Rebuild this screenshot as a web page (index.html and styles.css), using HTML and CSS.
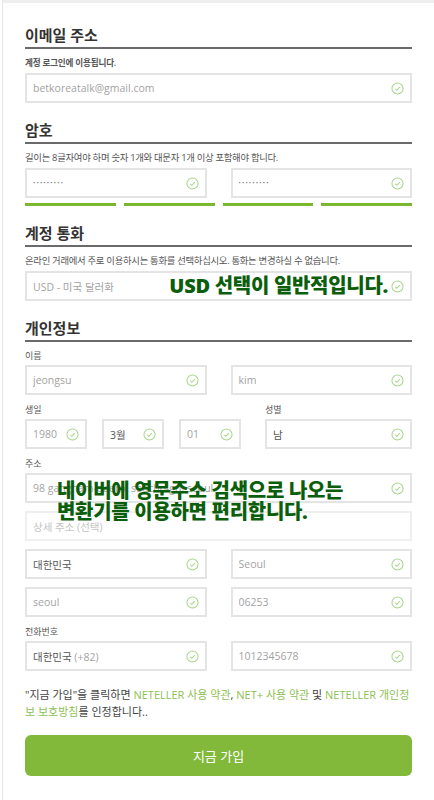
FILE: index.html
```html
<!DOCTYPE html>
<html lang="ko">

<head>
    <meta charset="UTF-8" />
    <meta name="viewport" content="width=device-width, initial-scale=1.0" />
    <title>NETELLER 가입</title>
    <link rel="stylesheet" href="styles.css">
</head>

<body>
    <div class="page">
        <!-- email -->
        <div class="section">
            <h3 class="title">이메일 주소</h3>
            <p class="help help-tight">계정 로그인에 이용됩니다.</p>
            <div class="field">
                <span class="val">betkoreatalk@gmail.com</span>
                <svg class="ok" viewBox="0 0 14 14"><circle cx="7" cy="7" r="6"/><path d="M4.6 7.3l1.7 1.7 3.1-3.4"/></svg>
            </div>
        </div>

        <!-- password -->
        <div class="section">
            <h3 class="title">암호</h3>
            <p class="help">길이는 8글자여야 하며 숫자 1개와 대문자 1개 이상 포함해야 합니다.</p>
            <div class="row">
                <div class="field">
                    <span class="val dots">•••••••••</span>
                    <svg class="ok" viewBox="0 0 14 14"><circle cx="7" cy="7" r="6"/><path d="M4.6 7.3l1.7 1.7 3.1-3.4"/></svg>
                </div>
                <div class="field">
                    <span class="val dots">•••••••••</span>
                    <svg class="ok" viewBox="0 0 14 14"><circle cx="7" cy="7" r="6"/><path d="M4.6 7.3l1.7 1.7 3.1-3.4"/></svg>
                </div>
            </div>
            <div class="strength">
                <span></span><span></span><span></span><span></span>
            </div>
        </div>

        <!-- currency -->
        <div class="section">
            <h3 class="title">계정 통화</h3>
            <p class="help">온라인 거래에서 주로 이용하시는 통화를 선택하십시오. 통화는 변경하실 수 없습니다.</p>
            <div class="field">
                <span class="val">USD - 미국 달러화</span>
                <svg class="ok" viewBox="0 0 14 14"><circle cx="7" cy="7" r="6"/><path d="M4.6 7.3l1.7 1.7 3.1-3.4"/></svg>
                <span class="note note-usd">USD 선택이 일반적입니다.</span>
            </div>
        </div>

        <!-- personal -->
        <div class="section">
            <h3 class="title">개인정보</h3>

            <label class="label">이름</label>
            <div class="row">
                <div class="field">
                    <span class="val">jeongsu</span>
                    <svg class="ok" viewBox="0 0 14 14"><circle cx="7" cy="7" r="6"/><path d="M4.6 7.3l1.7 1.7 3.1-3.4"/></svg>
                </div>
                <div class="field">
                    <span class="val">kim</span>
                    <svg class="ok" viewBox="0 0 14 14"><circle cx="7" cy="7" r="6"/><path d="M4.6 7.3l1.7 1.7 3.1-3.4"/></svg>
                </div>
            </div>

            <div class="birth-row">
                <div class="birth">
                    <label class="label">생일</label>
                    <div class="birth-fields">
                        <div class="field">
                            <span class="val">1980</span>
                            <svg class="ok" viewBox="0 0 14 14"><circle cx="7" cy="7" r="6"/><path d="M4.6 7.3l1.7 1.7 3.1-3.4"/></svg>
                        </div>
                        <div class="field">
                            <span class="val dark">3월</span>
                            <svg class="ok" viewBox="0 0 14 14"><circle cx="7" cy="7" r="6"/><path d="M4.6 7.3l1.7 1.7 3.1-3.4"/></svg>
                        </div>
                        <div class="field">
                            <span class="val">01</span>
                            <svg class="ok" viewBox="0 0 14 14"><circle cx="7" cy="7" r="6"/><path d="M4.6 7.3l1.7 1.7 3.1-3.4"/></svg>
                        </div>
                    </div>
                </div>
                <div class="gender">
                    <label class="label">성별</label>
                    <div class="field">
                        <span class="val dark">남</span>
                        <svg class="ok" viewBox="0 0 14 14"><circle cx="7" cy="7" r="6"/><path d="M4.6 7.3l1.7 1.7 3.1-3.4"/></svg>
                    </div>
                </div>
            </div>

            <label class="label">주소</label>
            <div class="address">
                <div class="field">
                    <span class="val">98 gangnam-daero, seocho-gu, seoul</span>
                    <svg class="ok" viewBox="0 0 14 14"><circle cx="7" cy="7" r="6"/><path d="M4.6 7.3l1.7 1.7 3.1-3.4"/></svg>
                </div>
                <div class="field field-empty">
                    <span class="val">상세 주소 (선택)</span>
                </div>
                <div class="row">
                    <div class="field">
                        <span class="val dark">대한민국</span>
                        <svg class="ok" viewBox="0 0 14 14"><circle cx="7" cy="7" r="6"/><path d="M4.6 7.3l1.7 1.7 3.1-3.4"/></svg>
                    </div>
                    <div class="field">
                        <span class="val">Seoul</span>
                        <svg class="ok" viewBox="0 0 14 14"><circle cx="7" cy="7" r="6"/><path d="M4.6 7.3l1.7 1.7 3.1-3.4"/></svg>
                    </div>
                </div>
                <div class="row">
                    <div class="field">
                        <span class="val">seoul</span>
                        <svg class="ok" viewBox="0 0 14 14"><circle cx="7" cy="7" r="6"/><path d="M4.6 7.3l1.7 1.7 3.1-3.4"/></svg>
                    </div>
                    <div class="field">
                        <span class="val">06253</span>
                        <svg class="ok" viewBox="0 0 14 14"><circle cx="7" cy="7" r="6"/><path d="M4.6 7.3l1.7 1.7 3.1-3.4"/></svg>
                    </div>
                </div>
                <p class="note note-addr">네이버에 영문주소 검색으로 나오는<br>변환기를 이용하면 편리합니다.</p>
            </div>

            <label class="label">전화번호</label>
            <div class="row">
                <div class="field">
                    <span class="val"><b class="dark">대한민국</b> (+82)</span>
                    <svg class="ok" viewBox="0 0 14 14"><circle cx="7" cy="7" r="6"/><path d="M4.6 7.3l1.7 1.7 3.1-3.4"/></svg>
                </div>
                <div class="field">
                    <span class="val">1012345678</span>
                    <svg class="ok" viewBox="0 0 14 14"><circle cx="7" cy="7" r="6"/><path d="M4.6 7.3l1.7 1.7 3.1-3.4"/></svg>
                </div>
            </div>
        </div>

        <p class="terms">"지금 가입"을 클릭하면 <a href="#">NETELLER 사용 약관</a>, <a href="#">NET+ 사용 약관</a> 및 <a href="#">NETELLER 개인정</a><br><a href="#">보 보호방침</a>를 인정합니다..</p>

        <button class="btn-join">지금 가입</button>
    </div>
</body>

</html>
```

FILE: styles.css
```css
* {
    margin: 0;
    padding: 0;
    box-sizing: border-box;
    font-family: "Open Sans", "Noto Sans CJK KR", sans-serif;
}

body {
    background: #fff;
    width: 434px;
    height: 800px;
    overflow: hidden;
}

.page {
    margin-left: 2px;
    border-top: 3px solid #eeeeee;
    border-left: 1px solid #e6e6e6;
    padding: 22px 22px 0 22px;
    min-height: 800px;
}

.section {
    margin-bottom: 17px;
}

.title {
    font-size: 15px;
    line-height: 20px;
    font-weight: 600;
    color: #333;
    padding-bottom: 2px;
    border-bottom: 2px solid #6a6a6a;
}

.help {
    font-size: 9.4px;
    line-height: 14px;
    color: #555;
    margin: 7px 0 3px;
    letter-spacing: -0.3px;
    white-space: nowrap;
}

.help-tight {
    font-size: 8.6px;
    font-weight: 600;
    letter-spacing: -0.2px;
}

.label {
    display: block;
    font-size: 9px;
    line-height: 14px;
    color: #555;
    margin: 8px 0 2px;
}

.title + .label {
    margin-top: 7px;
}

.field {
    position: relative;
    display: flex;
    align-items: center;
    justify-content: space-between;
    height: 30px;
    border: 2px solid #e4e4e4;
    padding: 0 6px;
}

.field-empty {
    border-color: #efefef;
}

.val {
    font-size: 10.5px;
    color: #a3a3a3;
    white-space: nowrap;
    overflow: hidden;
}

.val.dots {
    font-size: 6px;
    letter-spacing: 1.2px;
    color: #777;
}

.dark {
    color: #555;
    font-weight: normal;
}

.field-empty .val {
    color: #c4c4c4;
}

.ok {
    flex: none;
    width: 13px;
    height: 13px;
    fill: none;
    stroke: #a8d68c;
    stroke-width: 1.1;
}

.row {
    display: grid;
    grid-template-columns: 1fr 1fr;
    column-gap: 24px;
}

.strength {
    display: grid;
    grid-template-columns: repeat(4, 1fr);
    column-gap: 8px;
    margin-top: 5px;
}

.strength span {
    height: 3px;
    background: #7cb82f;
}

.birth-row {
    display: flex;
    gap: 24px;
}

.birth {
    flex: 0 0 216px;
}

.birth-fields {
    display: grid;
    grid-template-columns: repeat(3, 1fr);
    column-gap: 15px;
}

.gender {
    flex: 1;
}

.address {
    position: relative;
    display: flex;
    flex-direction: column;
    gap: 8px;
}

.note {
    position: absolute;
    font-size: 20px;
    line-height: 21px;
    font-weight: 900;
    color: #0b5e0b;
    white-space: nowrap;
    letter-spacing: -0.3px;
}

.note-usd {
    right: 22px;
    top: 2px;
}

.note-addr {
    left: 32px;
    top: 7px;
}

.terms {
    margin-top: -2px;
    font-size: 11px;
    line-height: 17px;
    color: #444;
}

.terms a {
    color: #8cc152;
    text-decoration: none;
}

.btn-join {
    display: block;
    width: 100%;
    height: 41px;
    margin-top: 15px;
    border: none;
    border-radius: 6px;
    background: #82b93a;
    color: #fff;
    font-size: 13px;
    cursor: pointer;
}
```
